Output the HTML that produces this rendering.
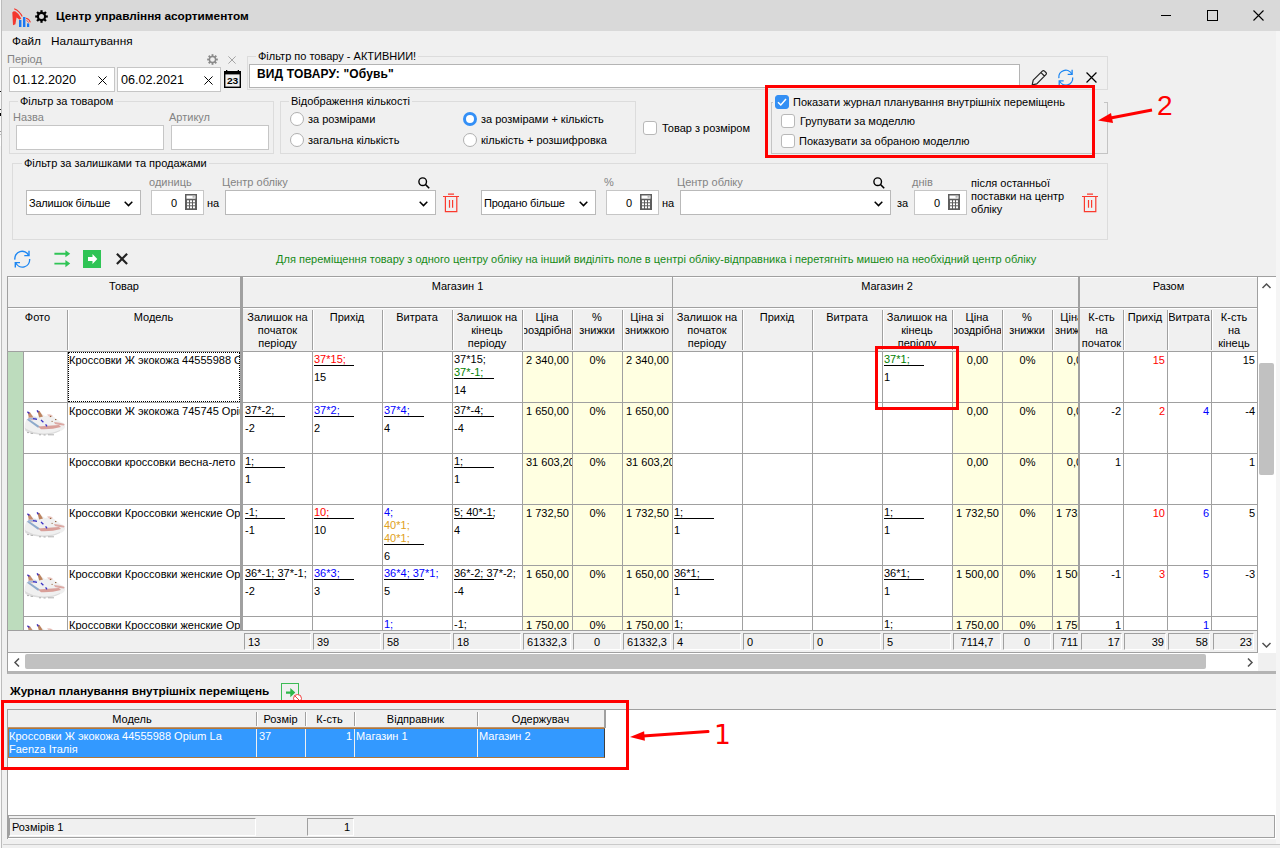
<!DOCTYPE html><html lang="uk"><head><meta charset="utf-8"><title>Центр управління асортиментом</title><style>
*{box-sizing:border-box;margin:0;padding:0}
html,body{width:1280px;height:848px;overflow:hidden}
body{background:#f0f0f0;font-family:"Liberation Sans",sans-serif;font-size:11px;color:#000;position:relative;line-height:13px}
.a{position:absolute;white-space:nowrap}
.g{color:#838383}
.inp{position:absolute;background:#fff;border:1px solid #c6c6c6}
.gb{position:absolute;border:1px solid #dcdcdc}
.gl{position:absolute;background:#f0f0f0;padding:0 2px;white-space:nowrap;line-height:13px}
.cb{position:absolute;width:13px;height:13px;background:#fff;border:1px solid #b8b8b8;border-radius:3px}
.rb{position:absolute;width:13px;height:13px;background:#fff;border:1px solid #b0b0b0;border-radius:50%}
.hl{position:absolute;background:#a0a0a0;height:1px}
.vl{position:absolute;background:#a0a0a0;width:1px}
.c{position:absolute;overflow:hidden;white-space:nowrap;line-height:13px}
.hd{position:absolute;overflow:hidden;text-align:center;line-height:13px;white-space:nowrap}
.u{position:absolute;height:1px;background:#000;width:40px}
.ft{position:absolute;height:18px;border:1px solid;border-color:#a0a0a0 #fff #fff #a0a0a0;background:#f0f0f0;line-height:16px;padding:0 3px;overflow:hidden;white-space:nowrap}
.red{color:#ff0000}.blu{color:#0000ff}.grn{color:#008000}.org{color:#e0a020}
svg{position:absolute;overflow:visible}
</style></head><body>
<div class="a" style="left:0;top:0;width:1280px;height:31px;background:#d9d9d9"></div>
<div class="a" style="left:0;top:0;width:1px;height:848px;background:#f8f8f8"></div>
<div class="a" style="left:1px;top:0;width:1px;height:848px;background:#bcbcbc"></div>
<div class="a" style="left:0;top:91px;width:1px;height:1px;background:#111"></div>
<div class="a" style="left:0;top:109px;width:1px;height:1px;background:#333"></div>
<div class="a" style="left:0;top:113px;width:1px;height:3px;background:#000"></div>
<div class="a" style="left:0;top:131px;width:1px;height:1px;background:#999"></div>
<div class="a" style="left:0;top:134px;width:1px;height:1px;background:#bbb"></div>
<div class="a" style="left:0;top:138px;width:1px;height:8px;background:#fff"></div>
<svg style="left:0;top:0" width="34" height="30" viewBox="0 0 34 30"><path d="M12.3 12.5 Q13.5 10.6 15.5 11.6 Q19.5 14 21.3 18.6 L19.6 19.8 L16.6 17.6 L15.4 24.3 L13 25.2 Z" fill="#f4382e"/><path d="M14.2 8.8 Q19.6 11 22.2 16.6" stroke="#f4382e" stroke-width="1.1" fill="none"/><path d="M26 18.2 Q29.4 19 30.4 22.4" stroke="#f4382e" stroke-width="1.1" fill="none"/><path d="M26.5 20.6 Q28 21 28.6 22.6" stroke="#f4382e" stroke-width="0.9" fill="none"/><rect x="19" y="20" width="2.4" height="7" fill="#1a76f2"/><rect x="23" y="17" width="2.4" height="10" fill="#1a76f2"/><rect x="27" y="23.4" width="2.2" height="3.6" fill="#1a76f2"/></svg>
<svg style="left:35px;top:10px" width="13" height="13" viewBox="0 0 13 13"><g transform="translate(6.5 6.5)"><circle r="3.6" fill="none" stroke="#000" stroke-width="2.2"/><rect x="-1.1" y="-6.3" width="2.2" height="2.6" fill="#000" transform="rotate(0)"/><rect x="-1.1" y="-6.3" width="2.2" height="2.6" fill="#000" transform="rotate(45)"/><rect x="-1.1" y="-6.3" width="2.2" height="2.6" fill="#000" transform="rotate(90)"/><rect x="-1.1" y="-6.3" width="2.2" height="2.6" fill="#000" transform="rotate(135)"/><rect x="-1.1" y="-6.3" width="2.2" height="2.6" fill="#000" transform="rotate(180)"/><rect x="-1.1" y="-6.3" width="2.2" height="2.6" fill="#000" transform="rotate(225)"/><rect x="-1.1" y="-6.3" width="2.2" height="2.6" fill="#000" transform="rotate(270)"/><rect x="-1.1" y="-6.3" width="2.2" height="2.6" fill="#000" transform="rotate(315)"/></g></svg>
<div class="a" style="left:56px;top:9px;font-weight:bold;font-size:11.8px;line-height:14px">Центр управління асортиментом</div>
<div class="a" style="left:1161px;top:15px;width:10px;height:1px;background:#000"></div>
<div class="a" style="left:1207px;top:10px;width:11px;height:11px;border:1px solid #000"></div>
<svg style="left:1253px;top:10px" width="11" height="11" viewBox="0 0 11 11"><path d="M0.5 0.5 L10.5 10.5 M10.5 0.5 L0.5 10.5" stroke="#000" stroke-width="1.1"/></svg>
<div class="a" style="left:12px;top:34px;font-size:11.8px;line-height:14px">Файл</div>
<div class="a" style="left:51px;top:34px;font-size:11.8px;line-height:14px">Налаштування</div>
<div class="a g" style="left:7px;top:53px">Період</div>
<svg style="left:207px;top:54px" width="11" height="11" viewBox="0 0 13 13"><g transform="translate(6.5 6.5)"><circle r="3.6" fill="none" stroke="#8a8a8a" stroke-width="1.6"/><rect x="-1.1" y="-6.3" width="2.2" height="2.6" fill="#8a8a8a" transform="rotate(0)"/><rect x="-1.1" y="-6.3" width="2.2" height="2.6" fill="#8a8a8a" transform="rotate(45)"/><rect x="-1.1" y="-6.3" width="2.2" height="2.6" fill="#8a8a8a" transform="rotate(90)"/><rect x="-1.1" y="-6.3" width="2.2" height="2.6" fill="#8a8a8a" transform="rotate(135)"/><rect x="-1.1" y="-6.3" width="2.2" height="2.6" fill="#8a8a8a" transform="rotate(180)"/><rect x="-1.1" y="-6.3" width="2.2" height="2.6" fill="#8a8a8a" transform="rotate(225)"/><rect x="-1.1" y="-6.3" width="2.2" height="2.6" fill="#8a8a8a" transform="rotate(270)"/><rect x="-1.1" y="-6.3" width="2.2" height="2.6" fill="#8a8a8a" transform="rotate(315)"/></g></svg>
<svg style="left:228px;top:56px" width="8" height="8" viewBox="0 0 10 10"><path d="M0.5 0.5 L9.5 9.5 M9.5 0.5 L0.5 9.5" stroke="#9a9a9a" stroke-width="1.1" fill="none"/></svg>
<div class="inp" style="left:9px;top:67px;width:106px;height:25px"></div>
<div class="inp" style="left:117px;top:67px;width:104px;height:25px"></div>
<div class="a" style="left:13px;top:73px;font-size:12.6px;line-height:15px">01.12.2020</div>
<div class="a" style="left:121px;top:73px;font-size:12.6px;line-height:15px">06.02.2021</div>
<svg style="left:98px;top:76px" width="9" height="9" viewBox="0 0 10 10"><path d="M0.5 0.5 L9.5 9.5 M9.5 0.5 L0.5 9.5" stroke="#000" stroke-width="1.1" fill="none"/></svg>
<svg style="left:204px;top:76px" width="9" height="9" viewBox="0 0 10 10"><path d="M0.5 0.5 L9.5 9.5 M9.5 0.5 L0.5 9.5" stroke="#000" stroke-width="1.1" fill="none"/></svg>
<svg style="left:224px;top:70px" width="17" height="18" viewBox="0 0 17 18"><rect x="0.7" y="2" width="15.6" height="15.3" fill="#f0f0f0" stroke="#000" stroke-width="1.4"/><rect x="0" y="1" width="17" height="3.4" fill="#000"/><rect x="2" y="0" width="1.3" height="2" fill="#000"/><rect x="13.7" y="0" width="1.3" height="2" fill="#000"/><text x="8.6" y="14.2" font-family="Liberation Sans, sans-serif" font-size="8.6" font-weight="bold" text-anchor="middle" textLength="11.4" lengthAdjust="spacingAndGlyphs" fill="#000">23</text></svg>
<div class="gb" style="left:247px;top:56px;width:861px;height:34px"></div>
<div class="gl" style="left:256px;top:50px">Фільтр по товару - АКТИВНИИ!</div>
<div class="inp" style="left:249px;top:64px;width:771px;height:24px;border-color:#b4b4b4"></div>
<div class="a" style="left:257px;top:67px;font-weight:bold;font-size:12px;line-height:14px;letter-spacing:0.15px">ВИД ТОВАРУ: "Обувь"</div>
<svg style="left:1031px;top:69px" width="17" height="17" viewBox="0 0 17 17"><path d="M1.2 15.8 L2.2 11.2 L11.3 2.1 Q12.4 1 13.5 2.1 L14.9 3.5 Q16 4.6 14.9 5.7 L5.8 14.8 Z M10 3.6 L13.4 7" fill="none" stroke="#222" stroke-width="1.2" stroke-linejoin="round"/></svg>
<svg style="left:1058px;top:69px" width="16" height="17" viewBox="0 0 17 18"><path d="M0.9 9.6 A7.3 7.3 0 0 1 14.7 5.4 M15.6 9 A7.3 7.3 0 0 1 1.7 12.8" fill="none" stroke="#1c86f2" stroke-width="1.4"/><path d="M15 0.8 V5.6 H10.3 M1.3 17.4 V12.6 H6" fill="none" stroke="#1c86f2" stroke-width="1.4"/></svg>
<svg style="left:1086px;top:72px" width="11" height="11" viewBox="0 0 10 10"><path d="M0.5 0.5 L9.5 9.5 M9.5 0.5 L0.5 9.5" stroke="#000" stroke-width="1.1" fill="none"/></svg>
<div class="gb" style="left:9px;top:101px;width:265px;height:53px"></div>
<div class="gl" style="left:18px;top:95px">Фільтр за товаром</div>
<div class="a g" style="left:13px;top:111px">Назва</div>
<div class="a g" style="left:169px;top:111px">Артикул</div>
<div class="inp" style="left:16px;top:125px;width:148px;height:25px"></div>
<div class="inp" style="left:171px;top:125px;width:98px;height:25px"></div>
<div class="gb" style="left:280px;top:101px;width:356px;height:53px"></div>
<div class="gl" style="left:289px;top:95px">Відображення кількості</div>
<div class="rb" style="left:290px;top:112px;width:14px;height:14px"></div>
<div class="a" style="left:308px;top:113px">за розмірами</div>
<div class="rb" style="left:290px;top:133px;width:14px;height:14px"></div>
<div class="a" style="left:308px;top:134px">загальна кількість</div>
<div class="rb" style="left:463px;top:112px;width:14px;height:14px;background:#fff;border:3.5px solid #338ff6"></div>
<div class="a" style="left:481px;top:113px">за розмірами + кількість</div>
<div class="rb" style="left:463px;top:133px;width:14px;height:14px"></div>
<div class="a" style="left:481px;top:134px">кількість + розшифровка</div>
<div class="cb" style="left:643px;top:121px;width:14px;height:14px"></div>
<div class="a" style="left:662px;top:122px">Товар з розміром</div>
<div class="gb" style="left:771px;top:102px;width:337px;height:52px;border-color:#c4c4c4"></div>
<div class="a" style="left:773px;top:94px;width:331px;height:16px;background:#f0f0f0"></div>
<div class="cb" style="left:775px;top:95px;width:14px;height:14px;background:#338ff4;border-color:#338ff4"></div>
<svg style="left:775px;top:95px" width="14" height="14" viewBox="0 0 14 14"><path d="M3 7.2 L5.8 10 L11 4" fill="none" stroke="#fff" stroke-width="1.5"/></svg>
<div class="a" style="left:793px;top:96px">Показати журнал планування внутрішніх переміщень</div>
<div class="cb" style="left:781px;top:114px;width:14px;height:14px"></div>
<div class="a" style="left:800px;top:115px">Групувати за моделлю</div>
<div class="cb" style="left:781px;top:134px;width:14px;height:14px"></div>
<div class="a" style="left:799px;top:135px">Показувати за обраною моделлю</div>
<div class="gb" style="left:12px;top:163px;width:1096px;height:77px"></div>
<div class="gl" style="left:22px;top:157px">Фільтр за залишками та продажами</div>
<div class="a g" style="left:149px;top:176px">одиниць</div>
<div class="a g" style="left:222px;top:176px">Центр обліку</div>
<div class="inp" style="left:26px;top:190px;width:115px;height:25px;border-color:#b9b9b9"></div>
<div class="a" style="left:29px;top:197px;letter-spacing:-0.2px">Залишок більше</div>
<svg style="left:124px;top:201px" width="9" height="6" viewBox="0 0 9 6"><path d="M0.7 0.8 L4.5 4.6 L8.3 0.8" fill="none" stroke="#000" stroke-width="1.5"/></svg>
<div class="inp" style="left:151px;top:190px;width:53px;height:25px;border-color:#c6c6c6"></div>
<div class="a" style="left:171px;top:197px">0</div>
<svg style="left:185px;top:194px" width="12" height="16" viewBox="0 0 12 16"><rect x="0" y="0" width="12" height="16" fill="#5e5e5e"/><rect x="1.5" y="1.5" width="9" height="3.2" fill="#fff"/><rect x="7.5" y="2.3" width="2.2" height="1.2" fill="#9a9a9a"/><rect x="2" y="6.3" width="2" height="2" fill="#fff"/><rect x="2" y="9.3" width="2" height="2" fill="#fff"/><rect x="2" y="12.3" width="2" height="2" fill="#fff"/><rect x="5" y="6.3" width="2" height="2" fill="#fff"/><rect x="5" y="9.3" width="2" height="2" fill="#fff"/><rect x="5" y="12.3" width="2" height="2" fill="#fff"/><rect x="8" y="6.3" width="2" height="2" fill="#fff"/><rect x="8" y="9.3" width="2" height="2" fill="#fff"/><rect x="8" y="12.3" width="2" height="2" fill="#fff"/></svg>
<div class="a" style="left:207px;top:197px">на</div>
<div class="inp" style="left:225px;top:190px;width:211px;height:25px;border-color:#b9b9b9"></div>
<svg style="left:419px;top:201px" width="9" height="6" viewBox="0 0 9 6"><path d="M0.7 0.8 L4.5 4.6 L8.3 0.8" fill="none" stroke="#000" stroke-width="1.5"/></svg>
<svg style="left:418px;top:177px" width="12" height="12" viewBox="0 0 12 12"><circle cx="4.7" cy="4.7" r="3.8" fill="none" stroke="#000" stroke-width="1.4"/><path d="M7.5 7.5 L11.2 11.2" stroke="#000" stroke-width="1.6"/></svg>
<svg style="left:443px;top:193px" width="16" height="19" viewBox="0 0 16 19"><path d="M0 3.5 H16 M5 1.1 H11 M2.4 3.5 V18.6 H13.8 V3.5 M6.5 7 V14.8 M9.6 7 V14.8" fill="none" stroke="#fa3a2e" stroke-width="1.2"/></svg>
<div class="inp" style="left:481px;top:190px;width:115px;height:25px;border-color:#b9b9b9"></div>
<div class="a" style="left:484px;top:197px;letter-spacing:-0.2px">Продано більше</div>
<svg style="left:579px;top:201px" width="9" height="6" viewBox="0 0 9 6"><path d="M0.7 0.8 L4.5 4.6 L8.3 0.8" fill="none" stroke="#000" stroke-width="1.5"/></svg>
<div class="a g" style="left:604px;top:176px">%</div>
<div class="inp" style="left:606px;top:190px;width:53px;height:25px;border-color:#c6c6c6"></div>
<div class="a" style="left:626px;top:197px">0</div>
<svg style="left:640px;top:194px" width="12" height="16" viewBox="0 0 12 16"><rect x="0" y="0" width="12" height="16" fill="#5e5e5e"/><rect x="1.5" y="1.5" width="9" height="3.2" fill="#fff"/><rect x="7.5" y="2.3" width="2.2" height="1.2" fill="#9a9a9a"/><rect x="2" y="6.3" width="2" height="2" fill="#fff"/><rect x="2" y="9.3" width="2" height="2" fill="#fff"/><rect x="2" y="12.3" width="2" height="2" fill="#fff"/><rect x="5" y="6.3" width="2" height="2" fill="#fff"/><rect x="5" y="9.3" width="2" height="2" fill="#fff"/><rect x="5" y="12.3" width="2" height="2" fill="#fff"/><rect x="8" y="6.3" width="2" height="2" fill="#fff"/><rect x="8" y="9.3" width="2" height="2" fill="#fff"/><rect x="8" y="12.3" width="2" height="2" fill="#fff"/></svg>
<div class="a" style="left:662px;top:197px">на</div>
<div class="a g" style="left:677px;top:176px">Центр обліку</div>
<div class="inp" style="left:680px;top:190px;width:211px;height:25px;border-color:#b9b9b9"></div>
<svg style="left:874px;top:201px" width="9" height="6" viewBox="0 0 9 6"><path d="M0.7 0.8 L4.5 4.6 L8.3 0.8" fill="none" stroke="#000" stroke-width="1.5"/></svg>
<svg style="left:873px;top:177px" width="12" height="12" viewBox="0 0 12 12"><circle cx="4.7" cy="4.7" r="3.8" fill="none" stroke="#000" stroke-width="1.4"/><path d="M7.5 7.5 L11.2 11.2" stroke="#000" stroke-width="1.6"/></svg>
<div class="a" style="left:897px;top:197px">за</div>
<div class="a g" style="left:912px;top:176px">днів</div>
<div class="inp" style="left:914px;top:190px;width:53px;height:25px;border-color:#c6c6c6"></div>
<div class="a" style="left:934px;top:197px">0</div>
<svg style="left:948px;top:194px" width="12" height="16" viewBox="0 0 12 16"><rect x="0" y="0" width="12" height="16" fill="#5e5e5e"/><rect x="1.5" y="1.5" width="9" height="3.2" fill="#fff"/><rect x="7.5" y="2.3" width="2.2" height="1.2" fill="#9a9a9a"/><rect x="2" y="6.3" width="2" height="2" fill="#fff"/><rect x="2" y="9.3" width="2" height="2" fill="#fff"/><rect x="2" y="12.3" width="2" height="2" fill="#fff"/><rect x="5" y="6.3" width="2" height="2" fill="#fff"/><rect x="5" y="9.3" width="2" height="2" fill="#fff"/><rect x="5" y="12.3" width="2" height="2" fill="#fff"/><rect x="8" y="6.3" width="2" height="2" fill="#fff"/><rect x="8" y="9.3" width="2" height="2" fill="#fff"/><rect x="8" y="12.3" width="2" height="2" fill="#fff"/></svg>
<div class="a" style="left:971px;top:177px;white-space:normal;width:100px;line-height:13px">після останньої поставки на центр обліку</div>
<svg style="left:1082px;top:193px" width="16" height="19" viewBox="0 0 16 19"><path d="M0 3.5 H16 M5 1.1 H11 M2.4 3.5 V18.6 H13.8 V3.5 M6.5 7 V14.8 M9.6 7 V14.8" fill="none" stroke="#fa3a2e" stroke-width="1.2"/></svg>
<svg style="left:14px;top:250px" width="17" height="18" viewBox="0 0 17 18"><path d="M0.9 9.6 A7.3 7.3 0 0 1 14.7 5.4 M15.6 9 A7.3 7.3 0 0 1 1.7 12.8" fill="none" stroke="#1c86f2" stroke-width="1.4"/><path d="M15 0.8 V5.6 H10.3 M1.3 17.4 V12.6 H6" fill="none" stroke="#1c86f2" stroke-width="1.4"/></svg>
<svg style="left:54px;top:250px" width="17" height="18" viewBox="0 0 17 18"><path d="M0.4 3.75 H12.5 M0.4 13.6 H12.5" fill="none" stroke="#2fc455" stroke-width="1.9"/><path d="M11.4 0.2 L16.2 3.75 L11.4 7.3 Z M11.4 10 L16.2 13.6 L11.4 17.2 Z" fill="#2fc455"/></svg>
<div class="a" style="left:83px;top:250px;width:18px;height:18px;background:#2fc455"></div>
<svg style="left:83px;top:250px" width="18" height="18" viewBox="0 0 18 18"><path d="M5 7 H9.5 V4 L14.3 9 L9.5 14 V11 H5 Z" fill="#fff"/></svg>
<svg style="left:116px;top:253px" width="12" height="12" viewBox="0 0 12 12"><path d="M0.9 0.8 L11.1 11 M11.1 0.8 L0.9 11" stroke="#222" stroke-width="2.2"/></svg>
<div class="a" style="left:276px;top:253px;color:#158a15;letter-spacing:0.02px">Для переміщення товару з одного центру обліку на інший виділіть поле в центрі обліку-відправника і перетягніть мишею на необхідний центр обліку</div>
<div class="a" style="left:7px;top:276px;width:1269px;height:398px;background:#f0f0f0;border:1px solid #a0a0a0;border-right:none;border-bottom:3px solid #b4b4b4"></div>
<div class="a" style="left:8px;top:352px;width:1250px;height:278px;background:#fff"></div>
<div class="a" style="left:8px;top:352px;width:15px;height:278px;background:#bddcbd"></div>
<div class="a" style="left:522px;top:352px;width:50px;height:278px;background:#ffffe1"></div>
<div class="a" style="left:572px;top:352px;width:50px;height:278px;background:#ffffe1"></div>
<div class="a" style="left:622px;top:352px;width:50px;height:278px;background:#ffffe1"></div>
<div class="a" style="left:952px;top:352px;width:50px;height:278px;background:#ffffe1"></div>
<div class="a" style="left:1002px;top:352px;width:50px;height:278px;background:#ffffe1"></div>
<div class="a" style="left:1052px;top:352px;width:26px;height:278px;background:#ffffe1"></div>
<div class="hl" style="left:8px;top:307px;width:1250px"></div>
<div class="hl" style="left:8px;top:351px;width:1250px"></div>
<div class="hl" style="left:8px;top:277px;width:1250px;background:#fff"></div>
<div class="hl" style="left:8px;top:308px;width:1250px;background:#fff"></div>
<div class="hd" style="left:8px;top:280px;width:232px">Товар</div>
<div class="hd" style="left:243px;top:280px;width:429px">Магазин 1</div>
<div class="hd" style="left:696px;top:280px;width:382px">Магазин 2</div>
<div class="hd" style="left:1080px;top:280px;width:177px">Разом</div>
<div class="hd" style="left:9px;top:311px;width:57px;height:39px"><div style="position:absolute;left:50%;transform:translateX(-50%);top:0">Фото</div></div>
<div class="hd" style="left:68px;top:311px;width:171px;height:39px"><div style="position:absolute;left:50%;transform:translateX(-50%);top:0">Модель</div></div>
<div class="hd" style="left:244px;top:311px;width:67px;height:39px"><div style="position:absolute;left:50%;transform:translateX(-50%);top:0">Залишок на<br>початок<br>періоду</div></div>
<div class="hd" style="left:313px;top:311px;width:68px;height:39px"><div style="position:absolute;left:50%;transform:translateX(-50%);top:0">Прихід</div></div>
<div class="hd" style="left:383px;top:311px;width:68px;height:39px"><div style="position:absolute;left:50%;transform:translateX(-50%);top:0">Витрата</div></div>
<div class="hd" style="left:453px;top:311px;width:68px;height:39px"><div style="position:absolute;left:50%;transform:translateX(-50%);top:0">Залишок на<br>кінець<br>періоду</div></div>
<div class="hd" style="left:523px;top:311px;width:48px;height:39px"><div style="position:absolute;left:50%;transform:translateX(-50%);top:0">Ціна<br>роздрібна</div></div>
<div class="hd" style="left:573px;top:311px;width:48px;height:39px"><div style="position:absolute;left:50%;transform:translateX(-50%);top:0">%<br>знижки</div></div>
<div class="hd" style="left:623px;top:311px;width:48px;height:39px"><div style="position:absolute;left:50%;transform:translateX(-50%);top:0">Ціна зі<br>знижкою</div></div>
<div class="hd" style="left:673px;top:311px;width:68px;height:39px"><div style="position:absolute;left:50%;transform:translateX(-50%);top:0">Залишок на<br>початок<br>періоду</div></div>
<div class="hd" style="left:743px;top:311px;width:68px;height:39px"><div style="position:absolute;left:50%;transform:translateX(-50%);top:0">Прихід</div></div>
<div class="hd" style="left:813px;top:311px;width:68px;height:39px"><div style="position:absolute;left:50%;transform:translateX(-50%);top:0">Витрата</div></div>
<div class="hd" style="left:883px;top:311px;width:68px;height:39px"><div style="position:absolute;left:50%;transform:translateX(-50%);top:0">Залишок на<br>кінець<br>періоду</div></div>
<div class="hd" style="left:953px;top:311px;width:48px;height:39px"><div style="position:absolute;left:50%;transform:translateX(-50%);top:0">Ціна<br>роздрібна</div></div>
<div class="hd" style="left:1003px;top:311px;width:48px;height:39px"><div style="position:absolute;left:50%;transform:translateX(-50%);top:0">%<br>знижки</div></div>
<div class="hd" style="left:1081px;top:311px;width:41px;height:39px"><div style="position:absolute;left:50%;transform:translateX(-50%);top:0">К-сть<br>на<br>початок</div></div>
<div class="hd" style="left:1124px;top:311px;width:42px;height:39px"><div style="position:absolute;left:50%;transform:translateX(-50%);top:0">Прихід</div></div>
<div class="hd" style="left:1168px;top:311px;width:42px;height:39px"><div style="position:absolute;left:50%;transform:translateX(-50%);top:0">Витрата</div></div>
<div class="hd" style="left:1212px;top:311px;width:44px;height:39px"><div style="position:absolute;left:50%;transform:translateX(-50%);top:0">К-сть<br>на<br>кінець</div></div>
<div class="hd" style="left:1053px;top:311px;width:25px;height:39px"><div style="position:absolute;left:24px;transform:translateX(-50%);top:0">Ціна зі<br>знижкою</div></div>
<div class="vl" style="left:67px;top:310px;height:40px;width:2px;border-right:1px solid #fff"></div>
<div class="vl" style="left:312px;top:310px;height:40px;width:2px;border-right:1px solid #fff"></div>
<div class="vl" style="left:382px;top:310px;height:40px;width:2px;border-right:1px solid #fff"></div>
<div class="vl" style="left:452px;top:310px;height:40px;width:2px;border-right:1px solid #fff"></div>
<div class="vl" style="left:522px;top:310px;height:40px;width:2px;border-right:1px solid #fff"></div>
<div class="vl" style="left:572px;top:310px;height:40px;width:2px;border-right:1px solid #fff"></div>
<div class="vl" style="left:622px;top:310px;height:40px;width:2px;border-right:1px solid #fff"></div>
<div class="vl" style="left:742px;top:310px;height:40px;width:2px;border-right:1px solid #fff"></div>
<div class="vl" style="left:812px;top:310px;height:40px;width:2px;border-right:1px solid #fff"></div>
<div class="vl" style="left:882px;top:310px;height:40px;width:2px;border-right:1px solid #fff"></div>
<div class="vl" style="left:952px;top:310px;height:40px;width:2px;border-right:1px solid #fff"></div>
<div class="vl" style="left:1002px;top:310px;height:40px;width:2px;border-right:1px solid #fff"></div>
<div class="vl" style="left:1052px;top:310px;height:40px;width:2px;border-right:1px solid #fff"></div>
<div class="vl" style="left:1123px;top:310px;height:40px;width:2px;border-right:1px solid #fff"></div>
<div class="vl" style="left:1167px;top:310px;height:40px;width:2px;border-right:1px solid #fff"></div>
<div class="vl" style="left:1211px;top:310px;height:40px;width:2px;border-right:1px solid #fff"></div>
<div class="a" style="left:240px;top:277px;width:3px;height:353px;background:#a0a0a0"></div>
<div class="a" style="left:672px;top:277px;width:1px;height:353px;background:#a0a0a0"></div>
<div class="a" style="left:1078px;top:277px;width:2px;height:353px;background:#a0a0a0"></div>
<div class="vl" style="left:23px;top:351px;height:279px"></div>
<div class="vl" style="left:67px;top:351px;height:279px"></div>
<div class="vl" style="left:312px;top:351px;height:279px"></div>
<div class="vl" style="left:382px;top:351px;height:279px"></div>
<div class="vl" style="left:452px;top:351px;height:279px"></div>
<div class="vl" style="left:522px;top:351px;height:279px"></div>
<div class="vl" style="left:572px;top:351px;height:279px"></div>
<div class="vl" style="left:622px;top:351px;height:279px"></div>
<div class="vl" style="left:742px;top:351px;height:279px"></div>
<div class="vl" style="left:812px;top:351px;height:279px"></div>
<div class="vl" style="left:882px;top:351px;height:279px"></div>
<div class="vl" style="left:952px;top:351px;height:279px"></div>
<div class="vl" style="left:1002px;top:351px;height:279px"></div>
<div class="vl" style="left:1052px;top:351px;height:279px"></div>
<div class="vl" style="left:1123px;top:351px;height:279px"></div>
<div class="vl" style="left:1167px;top:351px;height:279px"></div>
<div class="vl" style="left:1211px;top:351px;height:279px"></div>
<div class="hl" style="left:23px;top:402px;width:1235px"></div>
<div class="hl" style="left:23px;top:453px;width:1235px"></div>
<div class="hl" style="left:23px;top:504px;width:1235px"></div>
<div class="hl" style="left:23px;top:565px;width:1235px"></div>
<div class="hl" style="left:23px;top:616px;width:1235px"></div>
<div class="c " style="left:68px;top:354px;width:172px;padding-left:1px">Кроссовки Ж экокожа 44555988 Opium La Faenza</div>
<div class="a" style="left:68px;top:352px;width:172px;height:50px;border:1px dotted #000"></div>
<div class="c" style="left:313px;top:353px;width:69px;padding-left:1px"><span class="red">37*15;</span></div>
<div class="u" style="left:314px;top:365px"></div>
<div class="c" style="left:313px;top:371px;width:69px;padding-left:1px">15</div>
<div class="c" style="left:453px;top:353px;width:69px;padding-left:1px">37*15;<br><span class="grn">37*-1;</span></div>
<div class="u" style="left:454px;top:378px"></div>
<div class="c" style="left:453px;top:384px;width:69px;padding-left:1px">14</div>
<div class="c" style="left:523px;top:354px;width:49px;height:13px"><div style="position:absolute;left:0px;width:49px;text-align:center;top:0">2 340,00</div></div>
<div class="c" style="left:573px;top:354px;width:49px;height:13px"><div style="position:absolute;left:0px;width:49px;text-align:center;top:0">0%</div></div>
<div class="c" style="left:623px;top:354px;width:49px;height:13px"><div style="position:absolute;left:0px;width:49px;text-align:center;top:0">2 340,00</div></div>
<div class="c" style="left:883px;top:353px;width:69px;padding-left:1px"><span class="grn">37*1;</span></div>
<div class="u" style="left:884px;top:365px"></div>
<div class="c" style="left:883px;top:371px;width:69px;padding-left:1px">1</div>
<div class="c" style="left:953px;top:354px;width:49px;height:13px"><div style="position:absolute;left:0px;width:49px;text-align:center;top:0">0,00</div></div>
<div class="c" style="left:1003px;top:354px;width:49px;height:13px"><div style="position:absolute;left:0px;width:49px;text-align:center;top:0">0%</div></div>
<div class="c" style="left:1053px;top:354px;width:25px;height:13px"><div style="position:absolute;left:0px;width:49px;text-align:center;top:0">0,00</div></div>
<div class="c red" style="left:1124px;top:354px;width:43px;text-align:right;padding-right:2px">15</div>
<div class="c " style="left:1212px;top:354px;width:45px;text-align:right;padding-right:2px">15</div>
<svg style="left:24px;top:409px" width="42" height="27" viewBox="0 0 42 27"><defs><filter id="bl1" x="-10%" y="-10%" width="120%" height="120%"><feGaussianBlur stdDeviation="0.55"/></filter></defs><g filter="url(#bl1)"><path d="M0.5 18 Q1 12 3 10 L8 6 L13 8 L17 4 L21 7 Q27 5 30 8 Q34 11 37 13 Q41.5 14 41 18 Q40 21 36 22 Q30 25 20 25.5 Q8 25 2 22 Q0 20 0.5 18Z" fill="#f0f0f0"/><path d="M1 19 Q8 24 20 24.5 Q30 24 36 21 L36 22 Q30 25.5 20 26 Q8 25.5 1.5 22Z" fill="#dcdcdc"/><path d="M3.6 3 L6 3.2 L9.5 8.5 L5 9.5 Z" fill="#c58c6e"/><path d="M13.2 1.6 L15.6 2 L19 7.4 L15.2 8.4 Z" fill="#bd8460"/><path d="M3.6 8.6 Q8 7.6 12 9.4 L8 11.4 Z" fill="#e9bab2"/><path d="M2.6 10.6 L5 10 L16 17.6 L14 18.8 Z" fill="#8eaacb"/><path d="M4 9 L12 8.4 L13 9.8 L5 10.8Z" fill="#a4badb"/><path d="M14 17.6 Q24 16.6 35 16 L37 18 Q28 20.6 17 20.2 Z" fill="#d9a09a"/><path d="M30 13 Q36 13.4 40.6 15 L40 16.6 Q35 16 31 15 Z" fill="#dca9a4"/><path d="M23 5.6 Q27 4.6 29 7 L26 8.6Z" fill="#eac4bf"/><path d="M3.4 2.8 L5.4 4.4 M13 1.4 L14.4 3.4 M9 9.6 L13 10.4 M17 11 L19.4 13.2 M21.6 15.4 L23 17.4" stroke="#3a30c4" stroke-width="1.3"/><path d="M26 7.4 h1.2 M31 10.6 h1.4 M27.6 12.4 h1" stroke="#8a5a30" stroke-width="1"/><path d="M3 23.6 h2 M6.6 24.4 h2.4 M15 25.8 h2 M19.6 26 h2 M24 25.8 h6" stroke="#a8a8a8" stroke-width="0.9"/></g></svg>
<div class="c " style="left:68px;top:405px;width:172px;padding-left:1px">Кроссовки Ж экокожа 745745 Opium La Faenza</div>
<div class="c" style="left:244px;top:404px;width:68px;padding-left:1px">37*-2;</div>
<div class="u" style="left:245px;top:416px"></div>
<div class="c" style="left:244px;top:422px;width:68px;padding-left:1px">-2</div>
<div class="c" style="left:313px;top:404px;width:69px;padding-left:1px"><span class="blu">37*2;</span></div>
<div class="u" style="left:314px;top:416px"></div>
<div class="c" style="left:313px;top:422px;width:69px;padding-left:1px">2</div>
<div class="c" style="left:383px;top:404px;width:69px;padding-left:1px"><span class="blu">37*4;</span></div>
<div class="u" style="left:384px;top:416px"></div>
<div class="c" style="left:383px;top:422px;width:69px;padding-left:1px">4</div>
<div class="c" style="left:453px;top:404px;width:69px;padding-left:1px">37*-4;</div>
<div class="u" style="left:454px;top:416px"></div>
<div class="c" style="left:453px;top:422px;width:69px;padding-left:1px">-4</div>
<div class="c" style="left:523px;top:405px;width:49px;height:13px"><div style="position:absolute;left:0px;width:49px;text-align:center;top:0">1 650,00</div></div>
<div class="c" style="left:573px;top:405px;width:49px;height:13px"><div style="position:absolute;left:0px;width:49px;text-align:center;top:0">0%</div></div>
<div class="c" style="left:623px;top:405px;width:49px;height:13px"><div style="position:absolute;left:0px;width:49px;text-align:center;top:0">1 650,00</div></div>
<div class="c" style="left:953px;top:405px;width:49px;height:13px"><div style="position:absolute;left:0px;width:49px;text-align:center;top:0">0,00</div></div>
<div class="c" style="left:1003px;top:405px;width:49px;height:13px"><div style="position:absolute;left:0px;width:49px;text-align:center;top:0">0%</div></div>
<div class="c" style="left:1053px;top:405px;width:25px;height:13px"><div style="position:absolute;left:0px;width:49px;text-align:center;top:0">0,00</div></div>
<div class="c " style="left:1081px;top:405px;width:42px;text-align:right;padding-right:2px">-2</div>
<div class="c red" style="left:1124px;top:405px;width:43px;text-align:right;padding-right:2px">2</div>
<div class="c blu" style="left:1168px;top:405px;width:43px;text-align:right;padding-right:2px">4</div>
<div class="c " style="left:1212px;top:405px;width:45px;text-align:right;padding-right:2px">-4</div>
<div class="c " style="left:68px;top:456px;width:172px;padding-left:1px">Кроссовки кроссовки весна-лето</div>
<div class="c" style="left:244px;top:455px;width:68px;padding-left:1px">1;</div>
<div class="u" style="left:245px;top:467px"></div>
<div class="c" style="left:244px;top:473px;width:68px;padding-left:1px">1</div>
<div class="c" style="left:453px;top:455px;width:69px;padding-left:1px">1;</div>
<div class="u" style="left:454px;top:467px"></div>
<div class="c" style="left:453px;top:473px;width:69px;padding-left:1px">1</div>
<div class="c" style="left:523px;top:456px;width:49px;padding-left:3px">31 603,20</div>
<div class="c" style="left:573px;top:456px;width:49px;height:13px"><div style="position:absolute;left:0px;width:49px;text-align:center;top:0">0%</div></div>
<div class="c" style="left:623px;top:456px;width:49px;padding-left:3px">31 603,20</div>
<div class="c" style="left:953px;top:456px;width:49px;height:13px"><div style="position:absolute;left:0px;width:49px;text-align:center;top:0">0,00</div></div>
<div class="c" style="left:1003px;top:456px;width:49px;height:13px"><div style="position:absolute;left:0px;width:49px;text-align:center;top:0">0%</div></div>
<div class="c" style="left:1053px;top:456px;width:25px;height:13px"><div style="position:absolute;left:0px;width:49px;text-align:center;top:0">0,00</div></div>
<div class="c " style="left:1081px;top:456px;width:42px;text-align:right;padding-right:2px">1</div>
<div class="c " style="left:1212px;top:456px;width:45px;text-align:right;padding-right:2px">1</div>
<svg style="left:24px;top:511px" width="42" height="27" viewBox="0 0 42 27"><defs><filter id="bl2" x="-10%" y="-10%" width="120%" height="120%"><feGaussianBlur stdDeviation="0.55"/></filter></defs><g filter="url(#bl2)"><path d="M0.5 18 Q1 12 3 10 L8 6 L13 8 L17 4 L21 7 Q27 5 30 8 Q34 11 37 13 Q41.5 14 41 18 Q40 21 36 22 Q30 25 20 25.5 Q8 25 2 22 Q0 20 0.5 18Z" fill="#f0f0f0"/><path d="M1 19 Q8 24 20 24.5 Q30 24 36 21 L36 22 Q30 25.5 20 26 Q8 25.5 1.5 22Z" fill="#dcdcdc"/><path d="M3.6 3 L6 3.2 L9.5 8.5 L5 9.5 Z" fill="#c58c6e"/><path d="M13.2 1.6 L15.6 2 L19 7.4 L15.2 8.4 Z" fill="#bd8460"/><path d="M3.6 8.6 Q8 7.6 12 9.4 L8 11.4 Z" fill="#e9bab2"/><path d="M2.6 10.6 L5 10 L16 17.6 L14 18.8 Z" fill="#8eaacb"/><path d="M4 9 L12 8.4 L13 9.8 L5 10.8Z" fill="#a4badb"/><path d="M14 17.6 Q24 16.6 35 16 L37 18 Q28 20.6 17 20.2 Z" fill="#d9a09a"/><path d="M30 13 Q36 13.4 40.6 15 L40 16.6 Q35 16 31 15 Z" fill="#dca9a4"/><path d="M23 5.6 Q27 4.6 29 7 L26 8.6Z" fill="#eac4bf"/><path d="M3.4 2.8 L5.4 4.4 M13 1.4 L14.4 3.4 M9 9.6 L13 10.4 M17 11 L19.4 13.2 M21.6 15.4 L23 17.4" stroke="#3a30c4" stroke-width="1.3"/><path d="M26 7.4 h1.2 M31 10.6 h1.4 M27.6 12.4 h1" stroke="#8a5a30" stroke-width="1"/><path d="M3 23.6 h2 M6.6 24.4 h2.4 M15 25.8 h2 M19.6 26 h2 M24 25.8 h6" stroke="#a8a8a8" stroke-width="0.9"/></g></svg>
<div class="c " style="left:68px;top:507px;width:172px;padding-left:1px">Кроссовки Кроссовки женские Opium</div>
<div class="c" style="left:244px;top:506px;width:68px;padding-left:1px">-1;</div>
<div class="u" style="left:245px;top:518px"></div>
<div class="c" style="left:244px;top:524px;width:68px;padding-left:1px">-1</div>
<div class="c" style="left:313px;top:506px;width:69px;padding-left:1px"><span class="red">10;</span></div>
<div class="u" style="left:314px;top:518px"></div>
<div class="c" style="left:313px;top:524px;width:69px;padding-left:1px">10</div>
<div class="c" style="left:383px;top:506px;width:69px;padding-left:1px"><span class="blu">4;</span><br><span class="org">40*1;</span><br><span class="org">40*1;</span></div>
<div class="u" style="left:384px;top:544px"></div>
<div class="c" style="left:383px;top:550px;width:69px;padding-left:1px">6</div>
<div class="c" style="left:453px;top:506px;width:69px;padding-left:1px">5; 40*-1;</div>
<div class="u" style="left:454px;top:518px"></div>
<div class="c" style="left:453px;top:524px;width:69px;padding-left:1px">4</div>
<div class="c" style="left:523px;top:507px;width:49px;height:13px"><div style="position:absolute;left:0px;width:49px;text-align:center;top:0">1 732,50</div></div>
<div class="c" style="left:573px;top:507px;width:49px;height:13px"><div style="position:absolute;left:0px;width:49px;text-align:center;top:0">0%</div></div>
<div class="c" style="left:623px;top:507px;width:49px;height:13px"><div style="position:absolute;left:0px;width:49px;text-align:center;top:0">1 732,50</div></div>
<div class="c" style="left:673px;top:506px;width:69px;padding-left:1px">1;</div>
<div class="u" style="left:674px;top:518px"></div>
<div class="c" style="left:673px;top:524px;width:69px;padding-left:1px">1</div>
<div class="c" style="left:883px;top:506px;width:69px;padding-left:1px">1;</div>
<div class="u" style="left:884px;top:518px"></div>
<div class="c" style="left:883px;top:524px;width:69px;padding-left:1px">1</div>
<div class="c" style="left:953px;top:507px;width:49px;height:13px"><div style="position:absolute;left:0px;width:49px;text-align:center;top:0">1 732,50</div></div>
<div class="c" style="left:1003px;top:507px;width:49px;height:13px"><div style="position:absolute;left:0px;width:49px;text-align:center;top:0">0%</div></div>
<div class="c" style="left:1053px;top:507px;width:25px;height:13px"><div style="position:absolute;left:0px;width:49px;text-align:center;top:0">1 732,50</div></div>
<div class="c red" style="left:1124px;top:507px;width:43px;text-align:right;padding-right:2px">10</div>
<div class="c blu" style="left:1168px;top:507px;width:43px;text-align:right;padding-right:2px">6</div>
<div class="c " style="left:1212px;top:507px;width:45px;text-align:right;padding-right:2px">5</div>
<svg style="left:24px;top:572px" width="42" height="27" viewBox="0 0 42 27"><defs><filter id="bl3" x="-10%" y="-10%" width="120%" height="120%"><feGaussianBlur stdDeviation="0.55"/></filter></defs><g filter="url(#bl3)"><path d="M0.5 18 Q1 12 3 10 L8 6 L13 8 L17 4 L21 7 Q27 5 30 8 Q34 11 37 13 Q41.5 14 41 18 Q40 21 36 22 Q30 25 20 25.5 Q8 25 2 22 Q0 20 0.5 18Z" fill="#f0f0f0"/><path d="M1 19 Q8 24 20 24.5 Q30 24 36 21 L36 22 Q30 25.5 20 26 Q8 25.5 1.5 22Z" fill="#dcdcdc"/><path d="M3.6 3 L6 3.2 L9.5 8.5 L5 9.5 Z" fill="#c58c6e"/><path d="M13.2 1.6 L15.6 2 L19 7.4 L15.2 8.4 Z" fill="#bd8460"/><path d="M3.6 8.6 Q8 7.6 12 9.4 L8 11.4 Z" fill="#e9bab2"/><path d="M2.6 10.6 L5 10 L16 17.6 L14 18.8 Z" fill="#8eaacb"/><path d="M4 9 L12 8.4 L13 9.8 L5 10.8Z" fill="#a4badb"/><path d="M14 17.6 Q24 16.6 35 16 L37 18 Q28 20.6 17 20.2 Z" fill="#d9a09a"/><path d="M30 13 Q36 13.4 40.6 15 L40 16.6 Q35 16 31 15 Z" fill="#dca9a4"/><path d="M23 5.6 Q27 4.6 29 7 L26 8.6Z" fill="#eac4bf"/><path d="M3.4 2.8 L5.4 4.4 M13 1.4 L14.4 3.4 M9 9.6 L13 10.4 M17 11 L19.4 13.2 M21.6 15.4 L23 17.4" stroke="#3a30c4" stroke-width="1.3"/><path d="M26 7.4 h1.2 M31 10.6 h1.4 M27.6 12.4 h1" stroke="#8a5a30" stroke-width="1"/><path d="M3 23.6 h2 M6.6 24.4 h2.4 M15 25.8 h2 M19.6 26 h2 M24 25.8 h6" stroke="#a8a8a8" stroke-width="0.9"/></g></svg>
<div class="c " style="left:68px;top:568px;width:172px;padding-left:1px">Кроссовки Кроссовки женские Opium</div>
<div class="c" style="left:244px;top:567px;width:68px;padding-left:1px">36*-1; 37*-1;</div>
<div class="u" style="left:245px;top:579px"></div>
<div class="c" style="left:244px;top:585px;width:68px;padding-left:1px">-2</div>
<div class="c" style="left:313px;top:567px;width:69px;padding-left:1px"><span class="blu">36*3;</span></div>
<div class="u" style="left:314px;top:579px"></div>
<div class="c" style="left:313px;top:585px;width:69px;padding-left:1px">3</div>
<div class="c" style="left:383px;top:567px;width:69px;padding-left:1px"><span class="blu">36*4; 37*1;</span></div>
<div class="u" style="left:384px;top:579px"></div>
<div class="c" style="left:383px;top:585px;width:69px;padding-left:1px">5</div>
<div class="c" style="left:453px;top:567px;width:69px;padding-left:1px">36*-2; 37*-2;</div>
<div class="u" style="left:454px;top:579px"></div>
<div class="c" style="left:453px;top:585px;width:69px;padding-left:1px">-4</div>
<div class="c" style="left:523px;top:568px;width:49px;height:13px"><div style="position:absolute;left:0px;width:49px;text-align:center;top:0">1 650,00</div></div>
<div class="c" style="left:573px;top:568px;width:49px;height:13px"><div style="position:absolute;left:0px;width:49px;text-align:center;top:0">0%</div></div>
<div class="c" style="left:623px;top:568px;width:49px;height:13px"><div style="position:absolute;left:0px;width:49px;text-align:center;top:0">1 650,00</div></div>
<div class="c" style="left:673px;top:567px;width:69px;padding-left:1px">36*1;</div>
<div class="u" style="left:674px;top:579px"></div>
<div class="c" style="left:673px;top:585px;width:69px;padding-left:1px">1</div>
<div class="c" style="left:883px;top:567px;width:69px;padding-left:1px">36*1;</div>
<div class="u" style="left:884px;top:579px"></div>
<div class="c" style="left:883px;top:585px;width:69px;padding-left:1px">1</div>
<div class="c" style="left:953px;top:568px;width:49px;height:13px"><div style="position:absolute;left:0px;width:49px;text-align:center;top:0">1 500,00</div></div>
<div class="c" style="left:1003px;top:568px;width:49px;height:13px"><div style="position:absolute;left:0px;width:49px;text-align:center;top:0">0%</div></div>
<div class="c" style="left:1053px;top:568px;width:25px;height:13px"><div style="position:absolute;left:0px;width:49px;text-align:center;top:0">1 500,00</div></div>
<div class="c " style="left:1081px;top:568px;width:42px;text-align:right;padding-right:2px">-1</div>
<div class="c red" style="left:1124px;top:568px;width:43px;text-align:right;padding-right:2px">3</div>
<div class="c blu" style="left:1168px;top:568px;width:43px;text-align:right;padding-right:2px">5</div>
<div class="c " style="left:1212px;top:568px;width:45px;text-align:right;padding-right:2px">-3</div>
<div class="a" style="left:8px;top:616px;width:1250px;height:14px;overflow:hidden"><div style="position:absolute;left:-8px;top:-616px">
<svg style="left:24px;top:623px" width="42" height="27" viewBox="0 0 42 27"><defs><filter id="bl4" x="-10%" y="-10%" width="120%" height="120%"><feGaussianBlur stdDeviation="0.55"/></filter></defs><g filter="url(#bl4)"><path d="M0.5 18 Q1 12 3 10 L8 6 L13 8 L17 4 L21 7 Q27 5 30 8 Q34 11 37 13 Q41.5 14 41 18 Q40 21 36 22 Q30 25 20 25.5 Q8 25 2 22 Q0 20 0.5 18Z" fill="#f0f0f0"/><path d="M1 19 Q8 24 20 24.5 Q30 24 36 21 L36 22 Q30 25.5 20 26 Q8 25.5 1.5 22Z" fill="#dcdcdc"/><path d="M3.6 3 L6 3.2 L9.5 8.5 L5 9.5 Z" fill="#c58c6e"/><path d="M13.2 1.6 L15.6 2 L19 7.4 L15.2 8.4 Z" fill="#bd8460"/><path d="M3.6 8.6 Q8 7.6 12 9.4 L8 11.4 Z" fill="#e9bab2"/><path d="M2.6 10.6 L5 10 L16 17.6 L14 18.8 Z" fill="#8eaacb"/><path d="M4 9 L12 8.4 L13 9.8 L5 10.8Z" fill="#a4badb"/><path d="M14 17.6 Q24 16.6 35 16 L37 18 Q28 20.6 17 20.2 Z" fill="#d9a09a"/><path d="M30 13 Q36 13.4 40.6 15 L40 16.6 Q35 16 31 15 Z" fill="#dca9a4"/><path d="M23 5.6 Q27 4.6 29 7 L26 8.6Z" fill="#eac4bf"/><path d="M3.4 2.8 L5.4 4.4 M13 1.4 L14.4 3.4 M9 9.6 L13 10.4 M17 11 L19.4 13.2 M21.6 15.4 L23 17.4" stroke="#3a30c4" stroke-width="1.3"/><path d="M26 7.4 h1.2 M31 10.6 h1.4 M27.6 12.4 h1" stroke="#8a5a30" stroke-width="1"/><path d="M3 23.6 h2 M6.6 24.4 h2.4 M15 25.8 h2 M19.6 26 h2 M24 25.8 h6" stroke="#a8a8a8" stroke-width="0.9"/></g></svg>
<div class="c " style="left:68px;top:619px;width:172px;padding-left:1px">Кроссовки Кроссовки женские Opium</div>
<div class="c blu" style="left:383px;top:618px;width:69px;padding-left:1px">1;</div>
<div class="c " style="left:453px;top:618px;width:69px;padding-left:1px">-1;</div>
<div class="c " style="left:673px;top:618px;width:69px;padding-left:1px">1;</div>
<div class="c " style="left:883px;top:618px;width:69px;padding-left:1px">1;</div>
<div class="c" style="left:523px;top:619px;width:49px;height:13px"><div style="position:absolute;left:0px;width:49px;text-align:center;top:0">1 750,00</div></div>
<div class="c" style="left:573px;top:619px;width:49px;height:13px"><div style="position:absolute;left:0px;width:49px;text-align:center;top:0">0%</div></div>
<div class="c" style="left:623px;top:619px;width:49px;height:13px"><div style="position:absolute;left:0px;width:49px;text-align:center;top:0">1 750,00</div></div>
<div class="c" style="left:953px;top:619px;width:49px;height:13px"><div style="position:absolute;left:0px;width:49px;text-align:center;top:0">1 750,00</div></div>
<div class="c" style="left:1003px;top:619px;width:49px;height:13px"><div style="position:absolute;left:0px;width:49px;text-align:center;top:0">0%</div></div>
<div class="c" style="left:1053px;top:619px;width:25px;height:13px"><div style="position:absolute;left:0px;width:49px;text-align:center;top:0">1 750,00</div></div>
<div class="c " style="left:1081px;top:619px;width:42px;text-align:right;padding-right:2px">1</div>
<div class="c blu" style="left:1168px;top:619px;width:43px;text-align:right;padding-right:2px">1</div>
</div></div>
<div class="a" style="left:8px;top:630px;width:1250px;height:23px;background:#f0f0f0;border-top:1px solid #a0a0a0;border-bottom:1px solid #a0a0a0"></div>
<div class="ft" style="left:244px;top:633px;width:67px;height:17px;line-height:17px;text-align:left">13</div>
<div class="ft" style="left:313px;top:633px;width:68px;height:17px;line-height:17px;text-align:left">39</div>
<div class="ft" style="left:383px;top:633px;width:68px;height:17px;line-height:17px;text-align:left">58</div>
<div class="ft" style="left:453px;top:633px;width:68px;height:17px;line-height:17px;text-align:left">18</div>
<div class="ft" style="left:523px;top:633px;width:48px;height:17px;line-height:17px;text-align:center;padding:0">61332,3</div>
<div class="ft" style="left:573px;top:633px;width:48px;height:17px;line-height:17px;text-align:center;padding:0">0</div>
<div class="ft" style="left:623px;top:633px;width:48px;height:17px;line-height:17px;text-align:center;padding:0">61332,3</div>
<div class="ft" style="left:673px;top:633px;width:68px;height:17px;line-height:17px;text-align:left">4</div>
<div class="ft" style="left:743px;top:633px;width:68px;height:17px;line-height:17px;text-align:left">0</div>
<div class="ft" style="left:813px;top:633px;width:68px;height:17px;line-height:17px;text-align:left">0</div>
<div class="ft" style="left:883px;top:633px;width:68px;height:17px;line-height:17px;text-align:left">5</div>
<div class="ft" style="left:953px;top:633px;width:48px;height:17px;line-height:17px;text-align:center;padding:0">7114,7</div>
<div class="ft" style="left:1003px;top:633px;width:48px;height:17px;line-height:17px;text-align:center;padding:0">0</div>
<div class="ft" style="left:1053px;top:633px;width:25px;height:17px;line-height:17px;padding:0;border-right:none"><div style="position:absolute;left:0;width:46px;text-align:center">7114,7</div></div>
<div class="ft" style="left:1081px;top:633px;width:41px;height:17px;line-height:17px;text-align:right;padding-right:1px">17</div>
<div class="ft" style="left:1124px;top:633px;width:42px;height:17px;line-height:17px;text-align:right;padding-right:1px">39</div>
<div class="ft" style="left:1168px;top:633px;width:42px;height:17px;line-height:17px;text-align:right;padding-right:1px">58</div>
<div class="ft" style="left:1213px;top:633px;width:41px;height:17px;line-height:17px;text-align:right;padding-right:1px">23</div>
<div class="a" style="left:8px;top:653px;width:1250px;height:18px;background:#fff"></div>
<div class="a" style="left:25px;top:654px;width:1181px;height:15px;background:#c1c1c1;border-radius:2px"></div>
<svg style="left:14px;top:658px" width="6" height="9" viewBox="0 0 6 9"><path d="M5 0.5 L1 4.5 L5 8.5" fill="none" stroke="#505050" stroke-width="1.5"/></svg>
<svg style="left:1247px;top:658px" width="6" height="9" viewBox="0 0 6 9"><path d="M1 0.5 L5 4.5 L1 8.5" fill="none" stroke="#505050" stroke-width="1.5"/></svg>
<div class="a" style="left:1257px;top:277px;width:1px;height:376px;background:#a0a0a0"></div>
<div class="a" style="left:1258px;top:277px;width:18px;height:376px;background:#fff"></div>
<div class="a" style="left:1258px;top:653px;width:18px;height:18px;background:#f0f0f0"></div>
<div class="a" style="left:1259px;top:363px;width:15px;height:112px;background:#c1c1c1;border-radius:2px"></div>
<svg style="left:1262px;top:283px" width="9" height="6" viewBox="0 0 9 6"><path d="M0.5 5 L4.5 1 L8.5 5" fill="none" stroke="#505050" stroke-width="1.5"/></svg>
<svg style="left:1262px;top:642px" width="9" height="6" viewBox="0 0 9 6"><path d="M0.5 1 L4.5 5 L8.5 1" fill="none" stroke="#505050" stroke-width="1.5"/></svg>
<div class="a" style="left:10px;top:684px;font-weight:bold;font-size:11.8px;line-height:14px">Журнал планування внутрішніх переміщень</div>
<svg style="left:281px;top:683px" width="22" height="21" viewBox="0 0 22 21"><rect x="0.5" y="0.5" width="17" height="17" fill="#f0f0f0" stroke="#3dbb55"/><path d="M5 8.4 H9.3 V5 L14.3 9.6 L9.3 14.2 V10.8 H5 Z" fill="#2fb84a"/><circle cx="16.5" cy="15.5" r="4" fill="#fff" stroke="#f04040" stroke-width="1"/><path d="M13.8 12.8 L19.2 18.2" stroke="#f04040" stroke-width="1"/></svg>
<div class="a" style="left:7px;top:709px;width:1269px;height:130px;background:#fff;border:1px solid #a0a0a0;border-right:none;border-bottom:none"></div>
<div class="a" style="left:8px;top:815px;width:1267px;height:23px;background:#f0f0f0;border:1px solid #a0a0a0"></div>
<div class="a" style="left:3px;top:844px;width:1277px;height:1px;background:#cacaca"></div>
<div class="a" style="left:1276px;top:31px;width:4px;height:813px;background:#f5f5f5"></div>
<div class="a" style="left:8px;top:710px;width:596px;height:18px;background:#f0f0f0;border-bottom:1px solid #c0946a"></div>
<div class="a" style="left:604px;top:710px;width:2px;height:18px;background:#a0a0a0"></div>
<div class="hd" style="left:8px;top:713px;width:248px">Модель</div>
<div class="a" style="left:256px;top:712px;width:2px;height:14px;background:#a0a0a0;border-right:1px solid #fff"></div>
<div class="hd" style="left:256px;top:713px;width:49px">Розмір</div>
<div class="a" style="left:305px;top:712px;width:2px;height:14px;background:#a0a0a0;border-right:1px solid #fff"></div>
<div class="hd" style="left:305px;top:713px;width:49px">К-сть</div>
<div class="a" style="left:354px;top:712px;width:2px;height:14px;background:#a0a0a0;border-right:1px solid #fff"></div>
<div class="hd" style="left:354px;top:713px;width:123px">Відправник</div>
<div class="a" style="left:477px;top:712px;width:2px;height:14px;background:#a0a0a0;border-right:1px solid #fff"></div>
<div class="hd" style="left:477px;top:713px;width:127px">Одержувач</div>
<div class="a" style="left:8px;top:728px;width:597px;height:30px;background:#3399ff;border:1px solid #b0763a;border-right-color:#404040"></div>
<div class="a" style="left:256px;top:729px;width:1px;height:28px;background:#f0f0f0"></div>
<div class="a" style="left:305px;top:729px;width:1px;height:28px;background:#f0f0f0"></div>
<div class="a" style="left:354px;top:729px;width:1px;height:28px;background:#f0f0f0"></div>
<div class="a" style="left:477px;top:729px;width:1px;height:28px;background:#f0f0f0"></div>
<div class="a" style="left:9px;top:730px;color:#fff;white-space:normal;width:246px;line-height:13px">Кроссовки Ж экокожа 44555988 Opium La Faenza Італія</div>
<div class="a" style="left:259px;top:730px;color:#fff">37</div>
<div class="a" style="left:306px;top:730px;width:46px;text-align:right;color:#fff">1</div>
<div class="a" style="left:356px;top:730px;color:#fff">Магазин 1</div>
<div class="a" style="left:479px;top:730px;color:#fff">Магазин 2</div>
<div class="ft" style="left:9px;top:818px;width:247px;padding-left:2px">Розмірів 1</div>
<div class="ft" style="left:307px;top:818px;width:47px;text-align:right;padding-right:3px">1</div>
<div class="a" style="left:765px;top:85px;width:330px;height:73px;border:3px solid #ff0000"></div>
<div class="a" style="left:875px;top:346px;width:84px;height:64px;border:3px solid #ff0000"></div>
<div class="a" style="left:1px;top:700px;width:628px;height:70px;border:3px solid #ff0000"></div>
<svg style="left:0;top:0" width="1280" height="848" viewBox="0 0 1280 848"><g stroke="#ff0000" fill="#ff0000"><path d="M1152 110 L1108 118.5" stroke-width="3" fill="none"/><path d="M1098 120.5 L1111 113 L1113 123 Z" stroke="none"/><path d="M708 731.5 L643 736.1" stroke-width="3" stroke-linecap="round" fill="none"/><path d="M630 737 L644.1 731.3 L644.9 740.7 Z" stroke="none"/></g></svg>
<div class="a" style="left:1157px;top:91px;font-size:28px;line-height:30px;color:#ff0000">2</div>
<div class="a" style="left:714px;top:719px;font-family:'DejaVu Sans',sans-serif;font-size:26.5px;line-height:32px;color:#ff0000">1</div>
</body></html>
